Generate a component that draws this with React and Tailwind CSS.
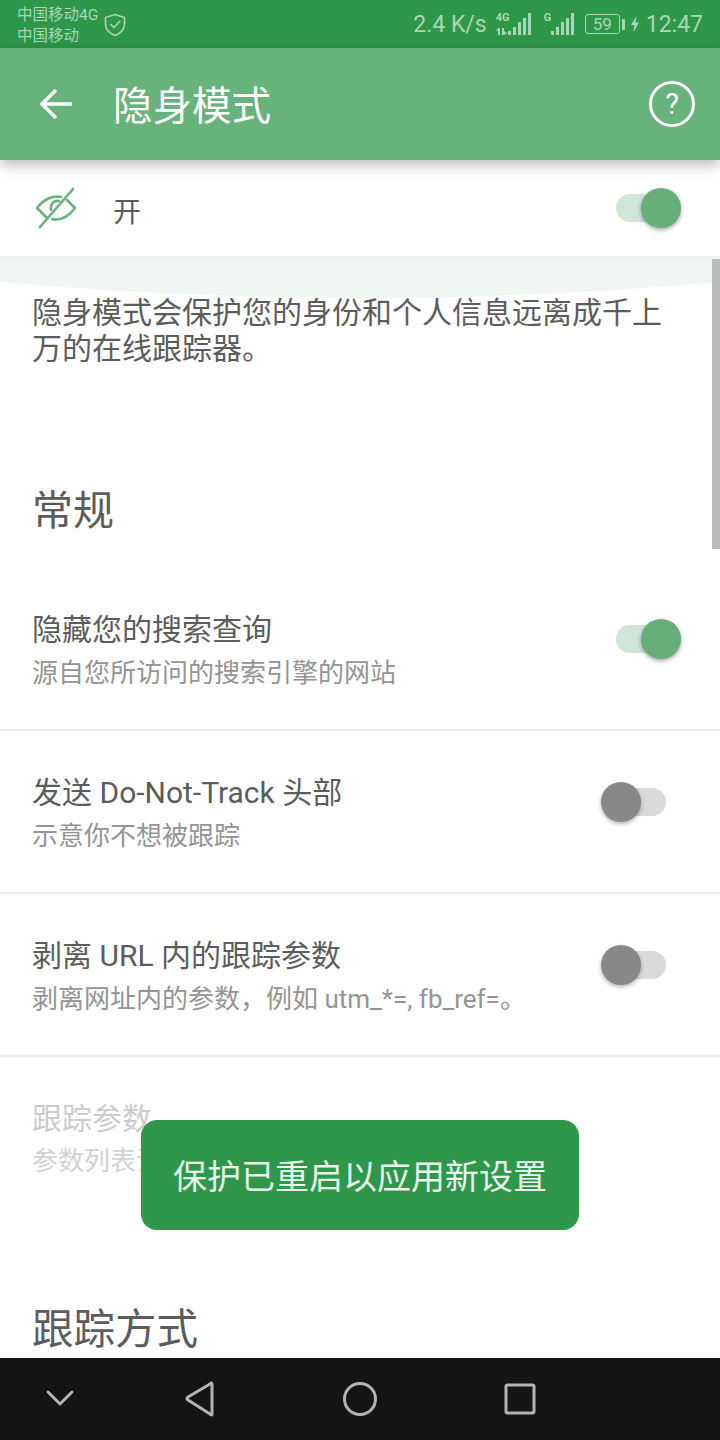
import React from "react";

const FONT = { fontFamily: 'Roboto, "Noto Sans CJK SC", sans-serif' };

function Bars({ className }) {
  return (
    <svg width="23" height="22" viewBox="0 0 23 22" className={className} fill="#a9d6b5">
      <rect x="0" y="18" width="3" height="4" />
      <rect x="5" y="14" width="3" height="8" />
      <rect x="10" y="9" width="3" height="13" />
      <rect x="15" y="5" width="3" height="17" />
      <rect x="20" y="0" width="3" height="22" />
    </svg>
  );
}

function Toggle({ on }) {
  if (on) {
    return (
      <div className="relative w-[65px] h-[40px] shrink-0">
        <div className="absolute left-0 top-[6px] w-[48px] h-[28px] rounded-full bg-[#cfe6d7]" />
        <div className="absolute right-0 top-0 w-[40px] h-[40px] rounded-full bg-[#68ae7b] shadow-[0_2px_4px_rgba(0,0,0,0.35)]" />
      </div>
    );
  }
  return (
    <div className="relative w-[65px] h-[40px] shrink-0">
      <div className="absolute right-0 top-[6px] w-[48px] h-[28px] rounded-full bg-[#dadada]" />
      <div className="absolute left-0 top-0 w-[40px] h-[40px] rounded-full bg-[#888888] shadow-[0_2px_4px_rgba(0,0,0,0.3)]" />
    </div>
  );
}

function Row({ title, sub, on }) {
  return (
    <div className="h-[163px] border-b-2 border-[#eeeeee] pl-[32px] flex relative">
      <div className="flex-1 pt-[43px]">
        <div className="text-[30px] leading-[38px] text-[#5c5c5c]">{title}</div>
        <div className="text-[26px] leading-[36px] mt-[6px] text-[#949494]">{sub}</div>
      </div>
      <div className={on ? "pt-[51px] pr-[39px]" : "pt-[51px] pr-[54px]"}>
        <Toggle on={on} />
      </div>
    </div>
  );
}

export default function App() {
  return (
    <div className="relative w-[720px] h-[1440px] overflow-hidden bg-white flex flex-col" style={FONT}>
      {/* status bar */}
      <div className="h-[48px] shrink-0 bg-[#2f974a] flex items-center text-[#a9d6b5] pl-[17px] pr-[17px]">
        <div className="w-[87px] text-[15.5px] leading-[21px] pt-[3px] whitespace-nowrap">
          <div>中国移动4G</div>
          <div>中国移动</div>
        </div>
        <svg width="22" height="24" viewBox="0 0 22 24" fill="none" stroke="#a9d6b5" strokeWidth="1.6" className="mt-[2px]">
          <path d="M11 1.5 L20.5 4.5 V11 C20.5 16.5 16 20.5 11 22.5 C6 20.5 1.5 16.5 1.5 11 V4.5 Z" />
          <path d="M6.5 11 L10 14.5 L16 8" />
        </svg>
        <div className="flex-1" />
        <div className="text-[23px] leading-[30px] mr-[9px] pt-[1px]">2.4 K/s</div>
        <div className="relative w-[35px] h-[24px] mr-[13px]">
          <span className="absolute left-0 top-[1px] text-[11px] leading-[10px] font-bold">4G</span>
          <svg width="12" height="7" viewBox="0 0 12 7" className="absolute left-0 bottom-[1px]" fill="#a9d6b5">
            <rect x="2" y="0" width="2" height="7" />
            <rect x="6" y="0" width="2" height="7" />
            <path d="M0 3 L2 0 V3 Z M8 3 L11 5 L8 7 Z" />
          </svg>
          <Bars className="absolute right-0 top-[1px]" />
        </div>
        <div className="relative w-[30px] h-[24px] mr-[11px]">
          <span className="absolute left-0 top-[1px] text-[11px] leading-[10px] font-bold">G</span>
          <Bars className="absolute right-0 top-[1px]" />
        </div>
        <div className="w-[35px] h-[20px] border border-[#a9d6b5] rounded-[3px] flex items-center justify-center text-[17px] leading-[18px]">59</div>
        <div className="w-[3px] h-[11px] bg-[#a9d6b5] ml-[2px] mr-[6px] rounded-[1px]" />
        <svg width="8" height="16" viewBox="0 0 8 16" fill="#a9d6b5" className="mr-[7px]">
          <path d="M5.500 0 L0 9 H3.200 L2.500 16 L8 6.500 H4.600 Z" />
        </svg>
        <div className="text-[23px] leading-[30px] pt-[1px]">12:47</div>
      </div>

      {/* app bar */}
      <div className="relative z-10 h-[112px] shrink-0 bg-[#68b27b] flex items-center pl-[39px] pr-[25px] shadow-[0_4px_14px_rgba(0,0,0,0.3)]">
        <svg width="34" height="34" viewBox="0 0 34 34" fill="none" stroke="white" strokeWidth="3.4">
          <path d="M33 17 H3 M17 3 L3 17 L17 31" />
        </svg>
        <div className="ml-[40px] mt-[6px] text-[39.5px] leading-[48px] text-white flex-1">隐身模式</div>
        <div className="w-[46px] h-[46px] rounded-full border-[3px] border-white flex items-center justify-center text-[29px] leading-none text-white">?</div>
      </div>

      {/* content */}
      <div className="flex-1 min-h-0 overflow-hidden">
        <div className="h-[98px] border-b-2 border-[#f0f0f0] flex items-center pl-[34px] pr-[39px]">
          <svg width="44" height="44" viewBox="0 0 44 44" fill="none" stroke="#68b27b" strokeWidth="2.6" strokeLinecap="round" strokeLinejoin="round" className="-mt-[1px] shrink-0">
            <path d="M13 32 L3 22 C9 14 18 9 27 11" />
            <path d="M33 14 L41 22 C35 30 27 35 18 33" />
            <path d="M25 15 C20 14 16 18 17 24" />
            <path d="M39 3 L6 41" />
          </svg>
          <div className="ml-[35px] text-[28px] leading-[36px] text-[#5c5c5c] flex-1 mt-[10px]">开</div>
          <div><Toggle on /></div>
        </div>
        <svg width="720" height="40" viewBox="0 0 720 40" className="block" preserveAspectRatio="none">
          <path d="M0 0 H720 V24 Q360 56 0 24 Z" fill="#f0f6f2" />
        </svg>
        <div className="pl-[32px] pr-[50px] text-[30px] leading-[36px] text-[#5c5c5c] -mt-[3px]">
          隐身模式会保护您的身份和个人信息远离成千上万的在线跟踪器。
        </div>
        <div className="pl-[32px] mt-[120px] text-[41px] leading-[48px] text-[#5c5c5c]">常规</div>
        <div className="mt-[33px]">
          <Row title="隐藏您的搜索查询" sub="源自您所访问的搜索引擎的网站" on />
          <Row title="发送 Do-Not-Track 头部" sub="示意你不想被跟踪" />
          <Row title="剥离 URL 内的跟踪参数" sub="剥离网址内的参数，例如 utm_*=, fb_ref=。" />
        </div>
        <div className="pl-[32px] pt-[43px] whitespace-nowrap">
          <div className="text-[30px] leading-[38px] text-[#cccccc]">跟踪参数</div>
          <div className="text-[26px] leading-[36px] mt-[5px] text-[#d2d2d2]">参数列表设置</div>
        </div>
        <div className="pl-[32px] mt-[127px] text-[41.5px] leading-[48px] text-[#5c5c5c]">跟踪方式</div>
      </div>

      {/* nav bar */}
      <div className="h-[82px] shrink-0 bg-[#141414] flex items-start">
        <svg width="720" height="82" viewBox="0 0 720 82" fill="none" stroke="#b3b3b3" strokeWidth="3" strokeLinejoin="round" strokeLinecap="round">
          <path d="M48 34 L60 46 L72 34" />
          <path d="M212 26 V56 Q212 58 210 56 L188 42 Q186 40.500 188 39 L210 26 Q212 24 212 26 Z" />
          <circle cx="360" cy="41" r="15.500" />
          <rect x="506" y="27" width="28" height="28" rx="1.500" />
        </svg>
      </div>

      {/* scrollbar */}
      <div className="absolute right-0 top-[259px] w-[8px] h-[290px] bg-[#bbbbbb]" />

      {/* toast */}
      <div className="absolute left-[141px] top-[1120px] w-[438px] h-[110px] rounded-[16px] bg-[#2f974a] flex items-center justify-center text-[34px] text-[#e8f5ec] pt-[4px]">
        保护已重启以应用新设置
      </div>
    </div>
  );
}
